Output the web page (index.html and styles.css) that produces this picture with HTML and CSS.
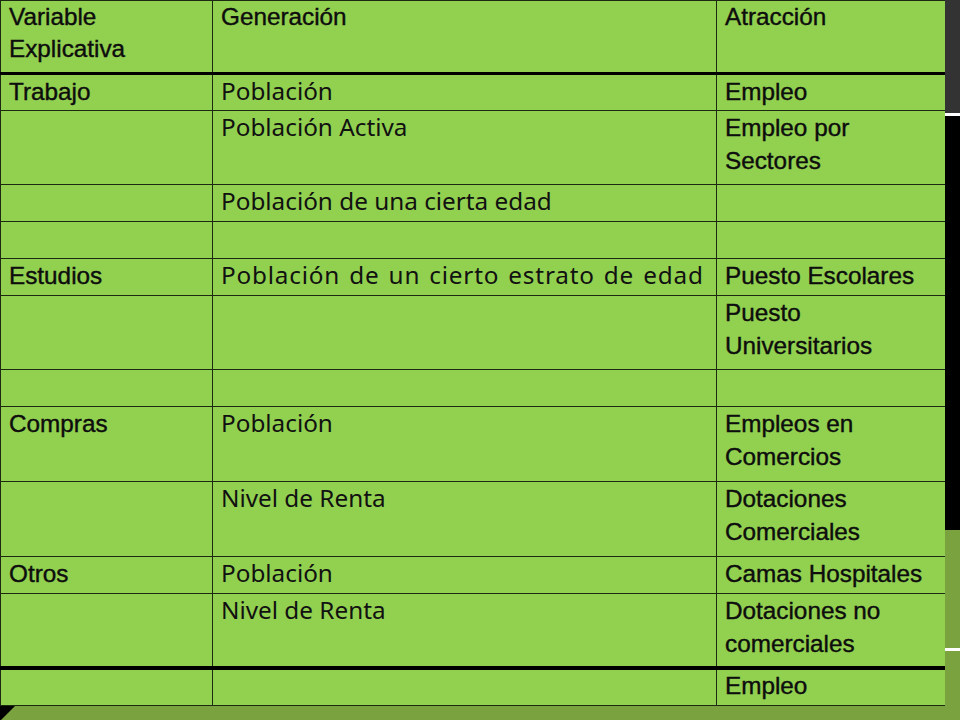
FILE: index.html
```html
<!DOCTYPE html>
<html lang="es">
<head>
<meta charset="utf-8">
<title>Variables explicativas</title>
<link rel="stylesheet" href="styles.css">
</head>
<body>
<div class="slide">
  <main class="main">
    <table class="vars">
      <colgroup>
        <col class="c1"><col class="c2"><col class="c3">
      </colgroup>
      <thead>
        <tr class="r-head">
          <th>Variable Explicativa</th>
          <th>Generación</th>
          <th>Atracción</th>
        </tr>
      </thead>
      <tbody>
        <tr class="r1"><td class="k">Trabajo</td><td class="g">Población</td><td class="a">Empleo</td></tr>
        <tr class="r2"><td></td><td class="g">Población Activa</td><td class="a">Empleo por Sectores</td></tr>
        <tr class="r1"><td></td><td class="g">Población de una cierta edad</td><td></td></tr>
        <tr class="r1"><td></td><td></td><td></td></tr>
        <tr class="r1"><td class="k">Estudios</td><td class="g wide">Población de un cierto estrato de edad</td><td class="a">Puesto Escolares</td></tr>
        <tr class="r2"><td></td><td></td><td class="a">Puesto Universitarios</td></tr>
        <tr class="r1"><td></td><td></td><td></td></tr>
        <tr class="r2 tall"><td class="k">Compras</td><td class="g">Población</td><td class="a">Empleos en Comercios</td></tr>
        <tr class="r2 tall"><td></td><td class="g">Nivel de Renta</td><td class="a">Dotaciones Comerciales</td></tr>
        <tr class="r1"><td class="k">Otros</td><td class="g">Población</td><td class="a">Camas Hospitales</td></tr>
        <tr class="r2"><td></td><td class="g">Nivel de Renta</td><td class="a">Dotaciones no comerciales</td></tr>
        <tr class="r1 last"><td></td><td></td><td class="a">Empleo</td></tr>
      </tbody>
    </table>
    <div class="foot"><span class="corner"></span></div>
  </main>
  <aside class="side">
    <div class="side-top"></div>
    <div class="side-rule"></div>
    <div class="side-black"></div>
    <div class="side-olive">
      <div class="side-olive-a"></div>
      <div class="side-rule"></div>
      <div class="side-olive-b"></div>
    </div>
  </aside>
</div>
</body>
</html>
```

FILE: styles.css
```css
* { box-sizing: border-box; }

html, body {
  margin: 0;
  padding: 0;
  width: 960px;
  height: 720px;
  overflow: hidden;
}

body {
  background: #7aa33f;
  font-family: "Liberation Sans", Arial, sans-serif;
  color: #0d0d0d;
}

.slide {
  display: grid;
  grid-template-columns: 945px 15px;
  height: 720px;
}

.main {
  display: flex;
  flex-direction: column;
  background: #7aa33f;
}

.vars {
  width: 945px;
  border-collapse: collapse;
  table-layout: fixed;
  background: #92d050;
}

.c1 { width: 212px; }
.c2 { width: 504px; }
.c3 { width: 229px; }

.vars th,
.vars td {
  border: 1px solid #1b2a10;
  padding: 0 8px;
  vertical-align: top;
  text-align: left;
  font-size: 24.3px;
  line-height: 33px;
  font-weight: normal;
}

.vars th,
.vars td.k,
.vars td.a {
  font-family: "Liberation Sans", Arial, sans-serif;
  -webkit-text-stroke: 0.4px #0d0d0d;
}

.r-head th {
  line-height: 32px;
}

.vars td.g {
  font-family: "Noto Sans", "Liberation Sans", sans-serif;
  font-size: 24.3px;
  line-height: 31px;
  color: #111;
}

.vars td.wide {
  letter-spacing: 0.8px;
  word-spacing: 2px;
}

.r-head th {
  height: 73px;
  border-bottom: 3px solid #000;
  padding-top: 0;
}

.r1 td { height: 37px; }
.r2 td { height: 74px; }
.r2.tall td { height: 75px; }

.last td {
  border-top: 4px solid #000;
  height: 38px;
}

.last td.a {
  line-height: 32px;
}

.foot {
  flex: 1;
  position: relative;
  background: #7aa33f;
}

.corner {
  position: absolute;
  left: 0;
  top: 0;
  width: 15px;
  height: 15px;
  background: #000;
  clip-path: polygon(0 0, 100% 0, 0 100%);
}

.side {
  display: flex;
  flex-direction: column;
}

.side-top {
  height: 113px;
  background: #333333;
}

.side-rule {
  height: 3px;
  background: #ffffff;
}

.side-black {
  height: 414px;
  background: #000;
}

.side-olive {
  flex: 1;
  display: flex;
  flex-direction: column;
  background: #7aa33f;
}

.side-olive-a { height: 118px; }
.side-olive-b { flex: 1; }
```
